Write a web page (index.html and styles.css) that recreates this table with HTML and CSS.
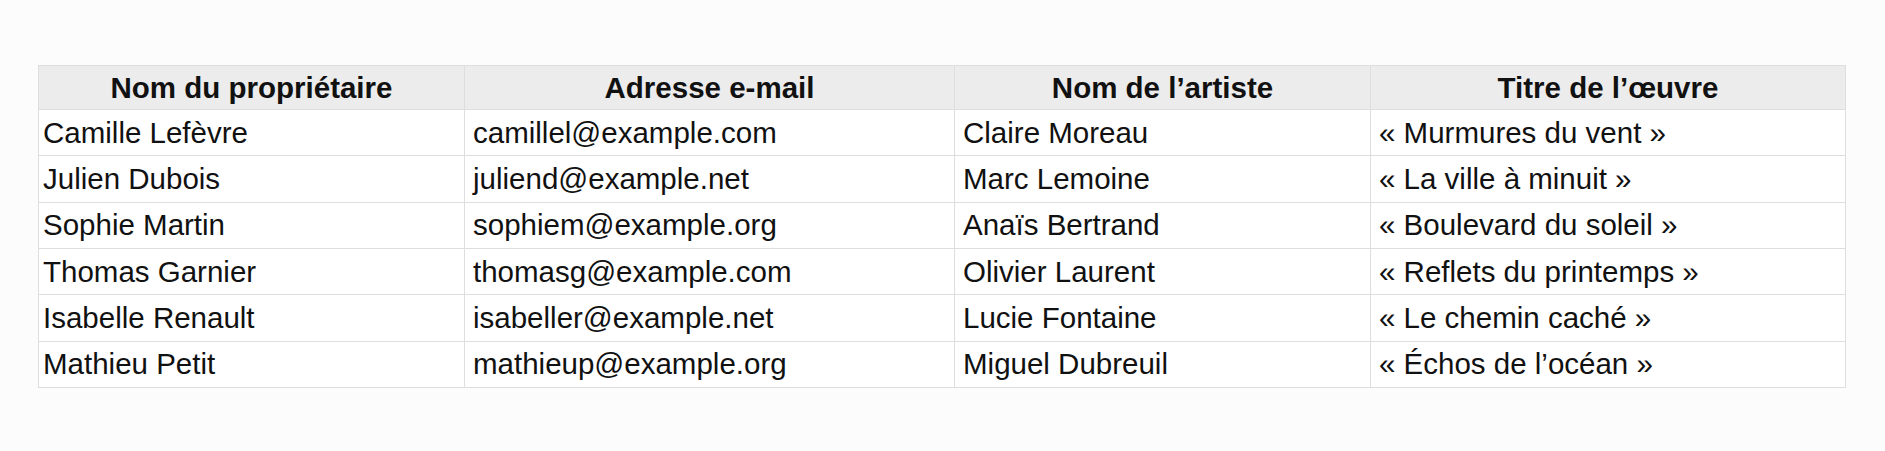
FILE: index.html
```html
<!DOCTYPE html>
<html lang="fr">
<head>
<meta charset="utf-8">
<title>Œuvres</title>
<link rel="stylesheet" href="styles.css">
</head>
<body>
<main class="page">
  <table class="grid">
    <colgroup>
      <col class="c1"><col class="c2"><col class="c3"><col class="c4">
    </colgroup>
    <thead>
      <tr>
        <th>Nom du propriétaire</th>
        <th>Adresse e-mail</th>
        <th>Nom de l’artiste</th>
        <th>Titre de l’œuvre</th>
      </tr>
    </thead>
    <tbody>
      <tr><td>Camille Lefèvre</td><td>camillel@example.com</td><td>Claire Moreau</td><td>« Murmures du vent »</td></tr>
      <tr><td>Julien Dubois</td><td>juliend@example.net</td><td>Marc Lemoine</td><td>« La ville à minuit »</td></tr>
      <tr><td>Sophie Martin</td><td>sophiem@example.org</td><td>Anaïs Bertrand</td><td>« Boulevard du soleil »</td></tr>
      <tr><td>Thomas Garnier</td><td>thomasg@example.com</td><td>Olivier Laurent</td><td>« Reflets du printemps »</td></tr>
      <tr><td>Isabelle Renault</td><td>isabeller@example.net</td><td>Lucie Fontaine</td><td>« Le chemin caché »</td></tr>
      <tr><td>Mathieu Petit</td><td>mathieup@example.org</td><td>Miguel Dubreuil</td><td>« Échos de l’océan »</td></tr>
    </tbody>
  </table>
</main>
</body>
</html>
```

FILE: styles.css
```css
html, body {
  margin: 0;
  padding: 0;
  background: #fcfcfc;
}
.page {
  padding: 65px 0 0 38px;
}
.grid {
  border-collapse: collapse;
  table-layout: fixed;
  width: 1807px;
  font-family: "Liberation Sans", Arial, sans-serif;
  font-size: 29.5px;
  color: #111;
  background: #fff;
}
.c1 { width: 426px; }
.c2 { width: 490px; }
.c3 { width: 416px; }
.c4 { width: 475px; }
.grid th,
.grid td {
  border: 1px solid #dedede;
  white-space: nowrap;
  overflow: hidden;
  line-height: 34px;
}
.grid th {
  background: #ececec;
  font-weight: bold;
  text-align: center;
  height: 43px;
  padding: 0 8px;
}
.grid td {
  text-align: left;
  height: 45.33px;
  padding: 0 8px;
}
.grid td:first-child {
  padding-left: 4px;
}
```
